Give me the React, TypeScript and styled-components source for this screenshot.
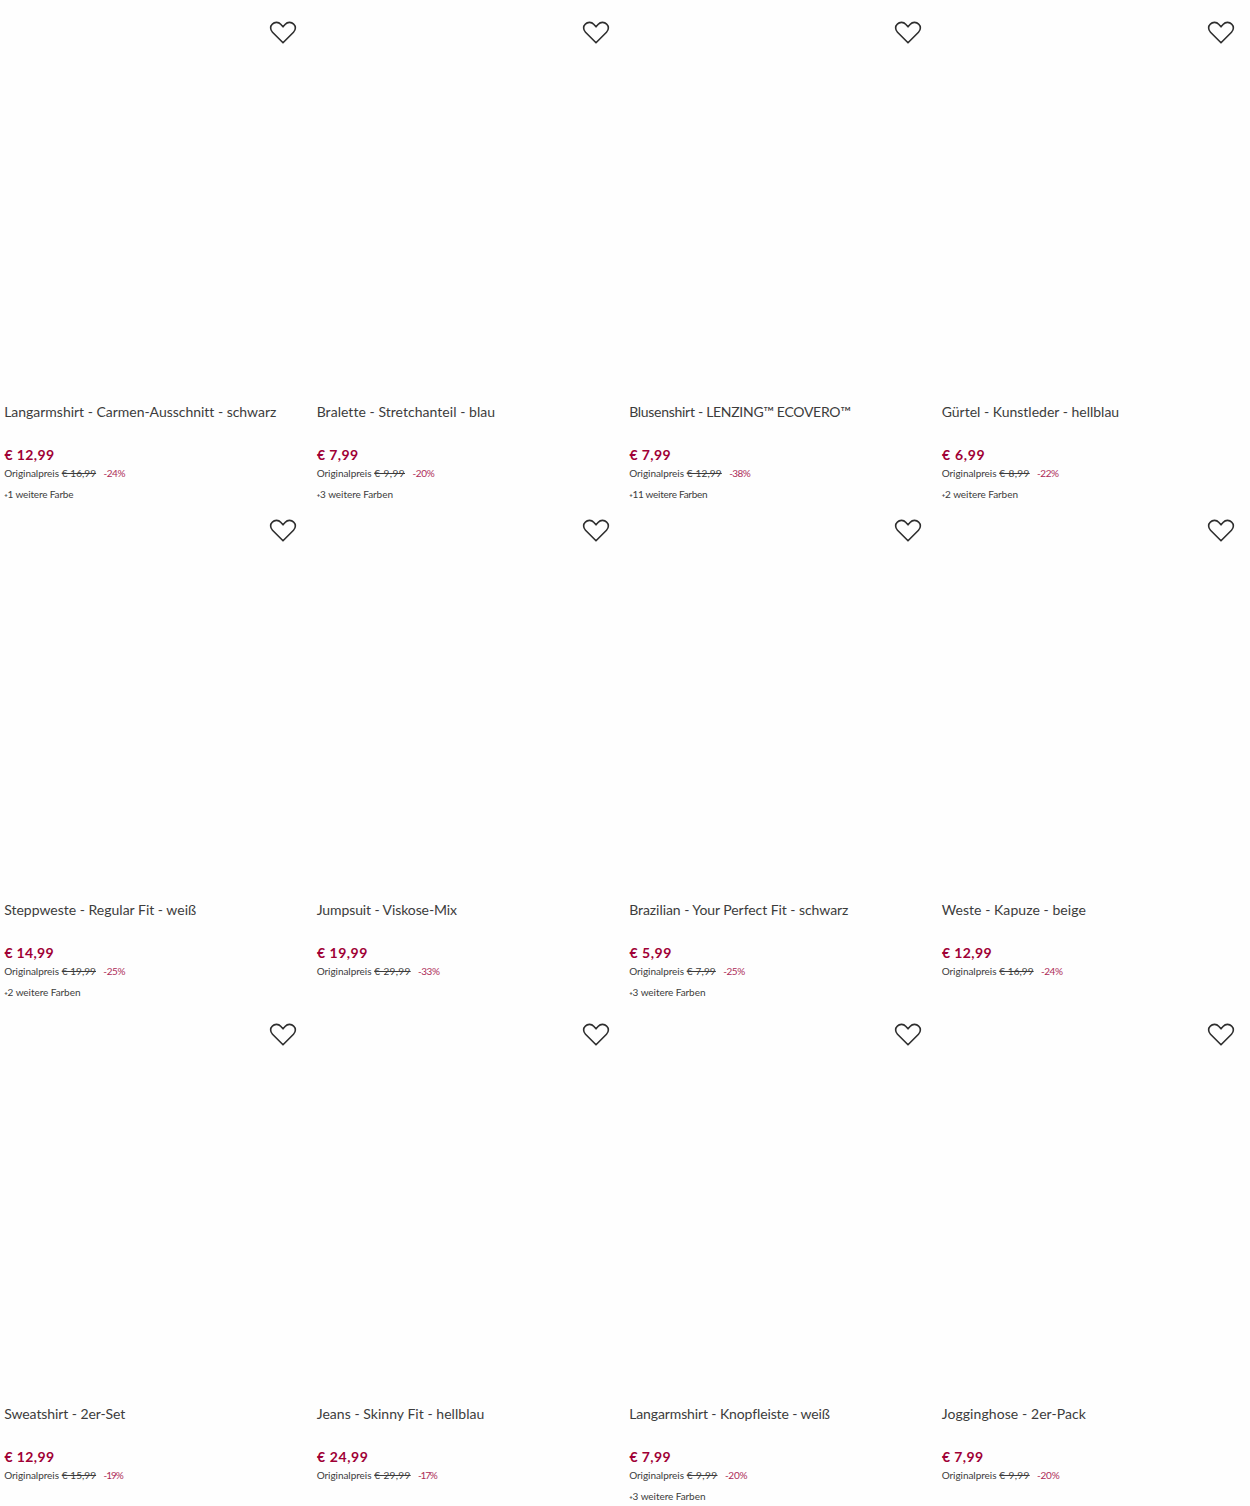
import React from 'react';
import styled, { createGlobalStyle } from 'styled-components';

const GlobalStyle = createGlobalStyle`
  * { box-sizing: border-box; }
  body {
    margin: 0;
    background: #fefefe;
    color: #3c3c3c;
    font-family: Lato, "Open Sans", sans-serif;
    overflow: hidden;
  }
`;

const Grid = styled.main`
  display: grid;
  grid-template-columns: repeat(4, 1fr);
  grid-template-rows: 498px 504px 504px;
  width: 1250px;
`;

const Card = styled.article`
  display: flex;
  flex-direction: column;
  min-width: 0;
  white-space: nowrap;
`;

const ImageArea = styled.div`
  display: flex;
  flex: none;
  justify-content: flex-end;
  align-items: flex-start;
  height: 402px;
  padding: 20px 15.2px 0 0;
`;

const WishButton = styled.button`
  display: flex;
  padding: 0;
  border: 0;
  background: none;
  color: #2e2e2e;
  cursor: pointer;
`;

const Info = styled.div`
  display: flex;
  flex: none;
  flex-direction: column;
  padding-left: 4.2px;
`;

const Title = styled.h2<{ $tracking: number }>`
  margin: 0;
  height: 43px;
  font-size: 14px;
  font-weight: 400;
  line-height: 20px;
  letter-spacing: ${(p) => p.$tracking}px;
`;

const Price = styled.strong<{ $tracking: number }>`
  padding-left: 0.3px;
  color: #a00035;
  font-size: 14px;
  font-weight: 700;
  line-height: 20px;
  letter-spacing: ${(p) => p.$tracking}px;
`;

const PriceDetails = styled.div`
  display: flex;
  font-size: 10px;
  line-height: 16px;
`;

const Label = styled.span`
  width: 57.6px;
  letter-spacing: -0.06px;
`;

const Original = styled.s<{ $tracking: number }>`
  letter-spacing: ${(p) => p.$tracking}px;
`;

const Discount = styled.span<{ $tracking: number }>`
  margin-left: 7.4px;
  color: #ad2c58;
  letter-spacing: ${(p) => p.$tracking}px;
`;

const Colors = styled.div<{ $tracking: number }>`
  margin-top: 5px;
  font-size: 10px;
  line-height: 16px;
  letter-spacing: ${(p) => p.$tracking}px;
`;

const Plus = styled.span`
  font-size: 6px;
  font-weight: 700;
  line-height: 1;
  vertical-align: 1px;
`;

type Tracked = [text: string, tracking: number];

interface Product {
  title: Tracked;
  price: Tracked;
  original: Tracked;
  discount: Tracked;
  colors?: Tracked;
}

const products: Product[] = [
  { title: ['Langarmshirt - Carmen-Ausschnitt - schwarz', -0.02], price: ['€ 12,99', 0.4], original: ['€ 16,99', 0.07], discount: ['-24%', -0.45], colors: ['1 weitere Farbe', -0.15] },
  { title: ['Bralette - Stretchanteil - blau', 0.04], price: ['€ 7,99', 0.4], original: ['€ 9,99', 0.45], discount: ['-20%', -0.3], colors: ['3 weitere Farben', -0.06] },
  { title: ['Blusenshirt - LENZING™ ECOVERO™', -0.29], price: ['€ 7,99', 0.4], original: ['€ 12,99', 0.17], discount: ['-38%', -0.55], colors: ['11 weitere Farben', -0.27] },
  { title: ['Gürtel - Kunstleder - hellblau', 0.0], price: ['€ 6,99', 0.72], original: ['€ 8,99', 0.4], discount: ['-22%', -0.45], colors: ['2 weitere Farben', -0.06] },
  { title: ['Steppweste - Regular Fit - weiß', 0.0], price: ['€ 14,99', 0.3], original: ['€ 19,99', 0.05], discount: ['-25%', -0.4], colors: ['2 weitere Farben', -0.06] },
  { title: ['Jumpsuit - Viskose-Mix', -0.1], price: ['€ 19,99', 0.5], original: ['€ 29,99', 0.37], discount: ['-33%', -0.5] },
  { title: ['Brazilian - Your Perfect Fit - schwarz', -0.06], price: ['€ 5,99', 0.55], original: ['€ 7,99', 0.17], discount: ['-25%', -0.45], colors: ['3 weitere Farben', -0.06] },
  { title: ['Weste - Kapuze - beige', 0.06], price: ['€ 12,99', 0.4], original: ['€ 16,99', 0.07], discount: ['-24%', -0.45] },
  { title: ['Sweatshirt - 2er-Set', -0.08], price: ['€ 12,99', 0.4], original: ['€ 15,99', 0.07], discount: ['-19%', -1] },
  { title: ['Jeans - Skinny Fit - hellblau', 0.04], price: ['€ 24,99', 0.6], original: ['€ 29,99', 0.37], discount: ['-17%', -1.2] },
  { title: ['Langarmshirt - Knopfleiste - weiß', -0.12], price: ['€ 7,99', 0.4], original: ['€ 9,99', 0.45], discount: ['-20%', -0.25], colors: ['3 weitere Farben', -0.06] },
  { title: ['Jogginghose - 2er-Pack', 0.08], price: ['€ 7,99', 0.4], original: ['€ 9,99', 0.4], discount: ['-20%', -0.25] },
];

const Heart = () => (
  <svg width="28" height="25" viewBox="0 0 28 25" fill="none" stroke="currentColor" strokeWidth="1.6" strokeLinejoin="round" aria-hidden="true">
    <path d="M14 22.8 3.5 12.2C1.1 9.8 1 6.3 3.3 4.1 5.7 1.7 9.5 1.8 11.7 4.2L14 6.8 16.3 4.2C18.5 1.8 22.3 1.7 24.7 4.1 27 6.3 26.9 9.8 24.5 12.2Z" />
  </svg>
);

function ProductCard({ title, price, original, discount, colors }: Product) {
  return (
    <Card>
      <ImageArea>
        <WishButton type="button">
          <Heart />
        </WishButton>
      </ImageArea>
      <Info>
        <Title $tracking={title[1]}>{title[0]}</Title>
        <Price $tracking={price[1]}>{price[0]}</Price>
        <PriceDetails>
          <Label>Originalpreis</Label>
          <Original $tracking={original[1]}>{original[0]}</Original>
          <Discount $tracking={discount[1]}>{discount[0]}</Discount>
        </PriceDetails>
        {colors && (
          <Colors $tracking={colors[1]}>
            <Plus>+</Plus>
            {colors[0]}
          </Colors>
        )}
      </Info>
    </Card>
  );
}

export default function App() {
  return (
    <>
      <GlobalStyle />
      <Grid>
        {products.map((product) => (
          <ProductCard key={product.title[0]} {...product} />
        ))}
      </Grid>
    </>
  );
}
